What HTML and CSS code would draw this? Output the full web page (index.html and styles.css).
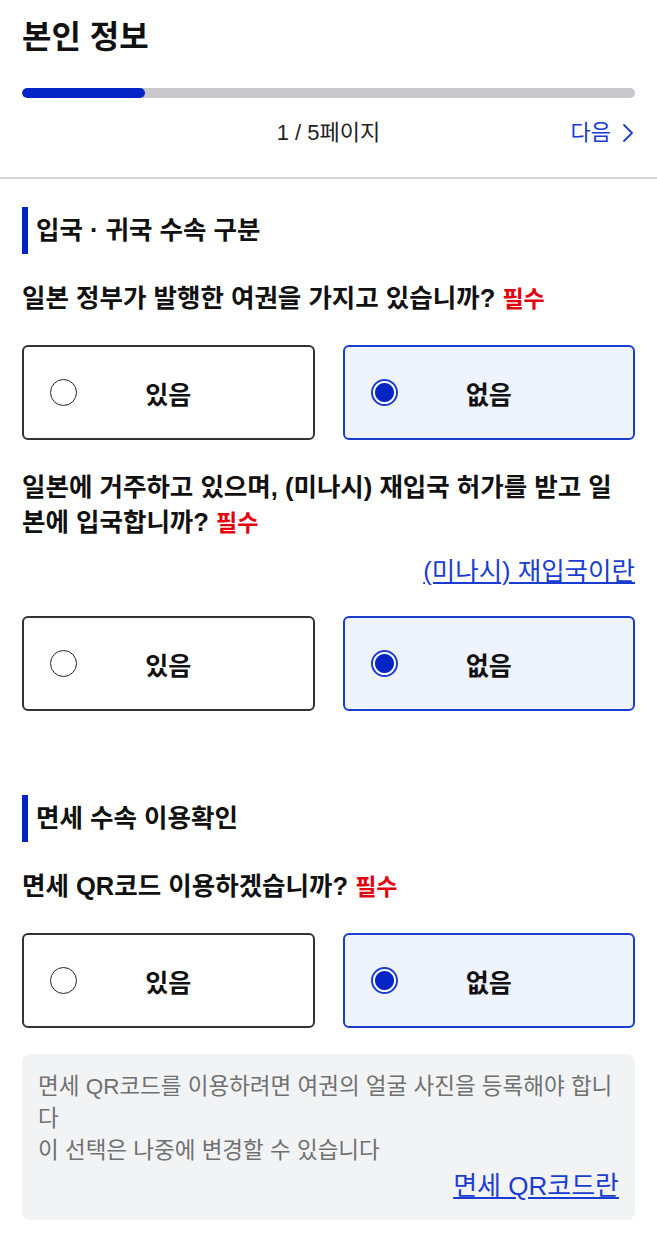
FILE: index.html
```html
<!DOCTYPE html>
<html lang="ko">

<head>
    <meta charset="UTF-8">
    <meta name="viewport" content="width=device-width, initial-scale=1.0">
    <title>본인 정보</title>
    <link rel="stylesheet" href="styles.css">
</head>

<body>
    <header class="top">
        <h1 class="title">본인 정보</h1>
        <div class="progress">
            <div class="progress-fill" style="width: 20%"></div>
        </div>
        <div class="pager">
            <span class="pager-count">1 / 5페이지</span>
            <a class="pager-next" href="#">다음
                <svg width="14" height="22" viewBox="0 0 14 22">
                    <path d="M3 3 L11 11 L3 19" fill="none" stroke="#1a3dcf" stroke-width="1.8" stroke-linecap="round" stroke-linejoin="round" />
                </svg>
            </a>
        </div>
    </header>

    <main class="content">
        <section class="section">
            <h2 class="section-title">입국 · 귀국 수속 구분</h2>

            <div class="question">
                <p class="question-text">일본 정부가 발행한 여권을 가지고 있습니까? <span class="required">필수</span></p>
                <div class="choices">
                    <label class="choice">
                        <input type="radio" name="passport" value="yes">
                        <span class="mark"></span>
                        <span class="choice-label">있음</span>
                    </label>
                    <label class="choice">
                        <input type="radio" name="passport" value="no" checked>
                        <span class="mark"></span>
                        <span class="choice-label">없음</span>
                    </label>
                </div>
            </div>

            <div class="question">
                <p class="question-text">일본에 거주하고 있으며, (미나시) 재입국 허가를 받고 일본에 입국합니까? <span class="required">필수</span></p>
                <div class="help"><a href="#">(미나시) 재입국이란</a></div>
                <div class="choices">
                    <label class="choice">
                        <input type="radio" name="reentry" value="yes">
                        <span class="mark"></span>
                        <span class="choice-label">있음</span>
                    </label>
                    <label class="choice">
                        <input type="radio" name="reentry" value="no" checked>
                        <span class="mark"></span>
                        <span class="choice-label">없음</span>
                    </label>
                </div>
            </div>
        </section>

        <section class="section">
            <h2 class="section-title">면세 수속 이용확인</h2>

            <div class="question">
                <p class="question-text">면세 QR코드 이용하겠습니까? <span class="required">필수</span></p>
                <div class="choices">
                    <label class="choice">
                        <input type="radio" name="taxfree" value="yes">
                        <span class="mark"></span>
                        <span class="choice-label">있음</span>
                    </label>
                    <label class="choice">
                        <input type="radio" name="taxfree" value="no" checked>
                        <span class="mark"></span>
                        <span class="choice-label">없음</span>
                    </label>
                </div>
            </div>

            <div class="note">
                <p>면세 QR코드를 이용하려면 여권의 얼굴 사진을 등록해야 합니다</p>
                <p>이 선택은 나중에 변경할 수 있습니다</p>
                <div class="help"><a href="#">면세 QR코드란</a></div>
            </div>
        </section>
    </main>
</body>

</html>
```

FILE: styles.css
```css
body {
    margin: 0;
    background-color: #fff;
    font-family: "Liberation Sans", "Noto Sans CJK KR", sans-serif;
    color: #111;
}

a {
    color: #1a3dcf;
}

/* header */

.top {
    padding: 17px 22px 30px;
    border-bottom: 2px solid #d6d6d6;
}

.title {
    margin: 0;
    font-size: 32px;
    line-height: 40px;
    font-weight: bold;
}

.progress {
    margin-top: 31px;
    height: 10px;
    border-radius: 5px;
    background-color: #c8c8cd;
    overflow: hidden;
}

.progress-fill {
    height: 100%;
    border-radius: 5px;
    background-color: #0424c6;
}

.pager {
    display: grid;
    grid-template-columns: 1fr auto 1fr;
    align-items: center;
    margin-top: 21px;
    font-size: 22px;
    line-height: 28px;
}

.pager-count {
    grid-column: 2;
    color: #222;
}

.pager-next {
    justify-self: end;
    display: flex;
    align-items: center;
    gap: 10px;
    text-decoration: none;
}

/* sections */

.content {
    padding: 28px 22px 20px;
}

.section + .section {
    margin-top: 84px;
}

.section-title {
    margin: 0;
    padding-left: 8px;
    border-left: 6px solid #0424c6;
    font-size: 25.5px;
    line-height: 47px;
    font-weight: bold;
}

.question {
    margin-top: 27px;
}

.question + .question {
    margin-top: 30px;
}

.question-text {
    margin: 0;
    font-size: 25.5px;
    line-height: 35px;
    font-weight: bold;
}

.required {
    color: #e5000f;
    font-size: 23px;
}

.help {
    margin-top: 14px;
    text-align: right;
    font-size: 25.5px;
    line-height: 32px;
}

/* radio cards */

.choices {
    display: grid;
    grid-template-columns: 1fr 1fr;
    gap: 28px;
    margin-top: 28px;
}

.help + .choices {
    margin-top: 29px;
}

.choice {
    display: grid;
    grid-template-columns: 28px 1fr 28px;
    align-items: center;
    height: 91px;
    padding: 0 26px;
    border: 2px solid #333;
    border-radius: 6px;
    background-color: #fff;
    cursor: pointer;
}

.choice input {
    display: none;
}

.mark {
    width: 27px;
    height: 27px;
    box-sizing: border-box;
    border: 1.5px solid #222;
    border-radius: 50%;
    background-color: #fff;
}

.choice-label {
    text-align: center;
    font-size: 25px;
    font-weight: bold;
}

.choice:has(input:checked) {
    border-color: #1a3dcf;
    background-color: #eef3fd;
}

.choice input:checked + .mark {
    border: 2px solid #1a3dcf;
    background: radial-gradient(circle, #0424c6 0 9px, #fff 10px);
}

/* note */

.note {
    margin-top: 26px;
    padding: 17px 16px 18px;
    border-radius: 8px;
    background-color: #f2f3f5;
    color: #707070;
    font-size: 22.5px;
    line-height: 32px;
}

.note p {
    margin: 0;
}

.note .help {
    margin: 3px 0 0;
    font-size: 26px;
    line-height: 32px;
}
```
